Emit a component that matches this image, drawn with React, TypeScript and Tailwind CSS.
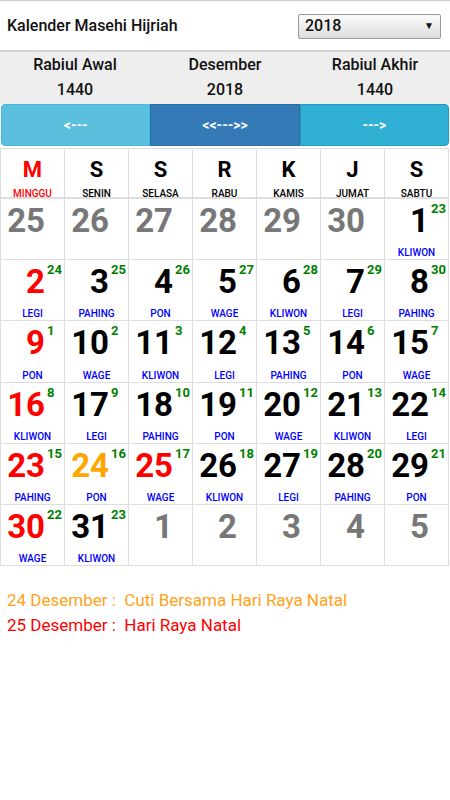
import React from "react";

type Cell = { n: number; h?: number; p?: string; c: string };

const GRAY = "text-[#777777]";
const RED = "text-[#ff0000]";
const BLK = "text-black";
const ORG = "text-[#ffa500]";

const rows: Cell[][] = [
  [
    { n: 25, c: GRAY },
    { n: 26, c: GRAY },
    { n: 27, c: GRAY },
    { n: 28, c: GRAY },
    { n: 29, c: GRAY },
    { n: 30, c: GRAY },
    { n: 1, h: 23, p: "KLIWON", c: BLK },
  ],
  [
    { n: 2, h: 24, p: "LEGI", c: RED },
    { n: 3, h: 25, p: "PAHING", c: BLK },
    { n: 4, h: 26, p: "PON", c: BLK },
    { n: 5, h: 27, p: "WAGE", c: BLK },
    { n: 6, h: 28, p: "KLIWON", c: BLK },
    { n: 7, h: 29, p: "LEGI", c: BLK },
    { n: 8, h: 30, p: "PAHING", c: BLK },
  ],
  [
    { n: 9, h: 1, p: "PON", c: RED },
    { n: 10, h: 2, p: "WAGE", c: BLK },
    { n: 11, h: 3, p: "KLIWON", c: BLK },
    { n: 12, h: 4, p: "LEGI", c: BLK },
    { n: 13, h: 5, p: "PAHING", c: BLK },
    { n: 14, h: 6, p: "PON", c: BLK },
    { n: 15, h: 7, p: "WAGE", c: BLK },
  ],
  [
    { n: 16, h: 8, p: "KLIWON", c: RED },
    { n: 17, h: 9, p: "LEGI", c: BLK },
    { n: 18, h: 10, p: "PAHING", c: BLK },
    { n: 19, h: 11, p: "PON", c: BLK },
    { n: 20, h: 12, p: "WAGE", c: BLK },
    { n: 21, h: 13, p: "KLIWON", c: BLK },
    { n: 22, h: 14, p: "LEGI", c: BLK },
  ],
  [
    { n: 23, h: 15, p: "PAHING", c: RED },
    { n: 24, h: 16, p: "PON", c: ORG },
    { n: 25, h: 17, p: "WAGE", c: RED },
    { n: 26, h: 18, p: "KLIWON", c: BLK },
    { n: 27, h: 19, p: "LEGI", c: BLK },
    { n: 28, h: 20, p: "PAHING", c: BLK },
    { n: 29, h: 21, p: "PON", c: BLK },
  ],
  [
    { n: 30, h: 22, p: "WAGE", c: RED },
    { n: 31, h: 23, p: "KLIWON", c: BLK },
    { n: 1, c: GRAY },
    { n: 2, c: GRAY },
    { n: 3, c: GRAY },
    { n: 4, c: GRAY },
    { n: 5, c: GRAY },
  ],
];

const days = [
  { l: "M", d: "MINGGU", red: true },
  { l: "S", d: "SENIN" },
  { l: "S", d: "SELASA" },
  { l: "R", d: "RABU" },
  { l: "K", d: "KAMIS" },
  { l: "J", d: "JUMAT" },
  { l: "S", d: "SABTU" },
];

export default function App() {
  return (
    <div
      className="w-[450px] h-[800px] bg-white overflow-hidden"
      style={{ fontFamily: "Roboto, 'Liberation Sans', sans-serif" }}
    >
      {/* title bar */}
      <div className="border-t border-[#cccccc] h-[50px] flex items-center justify-between pl-[7px] pr-[9px]">
        <div className="text-[16px] font-medium text-[#111]">Kalender Masehi Hijriah</div>
        <div className="w-[143px] h-[25px] mt-[1px] rounded-[2px] border border-[#9a9a9a] bg-gradient-to-b from-[#fbfbfb] to-[#dedede] flex items-center justify-between pl-[6px] pr-[6px]">
          <span className="text-[16px] font-medium text-[#111] leading-none">2018</span>
          <span className="text-[10px] text-[#111] leading-none">▼</span>
        </div>
      </div>

      {/* month band */}
      <div className="border-t-2 border-[#d4d4d4] bg-[#eeeeee] grid grid-cols-3 pb-[2px]">
        {[
          ["Rabiul Awal", "1440"],
          ["Desember", "2018"],
          ["Rabiul Akhir", "1440"],
        ].map(([a, b], i) => (
          <div key={i} className="flex flex-col items-center text-[16px] font-medium text-[#111] leading-[25px]">
            <span>{a}</span>
            <span>{b}</span>
          </div>
        ))}
      </div>

      {/* nav buttons */}
      <div className="mx-[1px] flex h-[42px] text-white text-[14px] font-bold">
        <div className="flex-1 flex items-center justify-center bg-[#5bc0de] border border-[#46b8da] rounded-l-[4px]">
          {"<---"}
        </div>
        <div className="flex-1 flex items-center justify-center bg-[#337ab7] border border-[#2e6da4]">
          {"<<--->>"}
        </div>
        <div className="flex-1 flex items-center justify-center bg-[#31b0d5] border border-[#269abc] rounded-r-[4px]">
          {"--->"}
        </div>
      </div>

      {/* calendar grid */}
      <div className="mt-[2px] w-[449px] border-t border-l border-[#dddddd]">
        <div className="flex">
          {days.map((d, i) => (
            <div
              key={i}
              className="w-[64px] h-[50px] border-r border-b-2 border-[#dddddd] flex flex-col items-center"
            >
              <span
                className={`text-[22px] font-bold leading-none mt-[10px] ${d.red ? "text-[#ff0000]" : "text-black"}`}
              >
                {d.l}
              </span>
              <span
                className={`text-[10px] font-medium leading-none mt-[8px] ${d.red ? "text-[#ff0000]" : "text-black"}`}
              >
                {d.d}
              </span>
            </div>
          ))}
        </div>
        {rows.map((r, ri) => (
          <div key={ri} className="flex">
            {r.map((c, ci) => (
              <div
                key={ci}
                className="w-[64px] h-[61.2px] border-r border-b border-[#dddddd] flex flex-col"
              >
                <div className="flex justify-end pr-[1px]">
                  <span className={`text-[33px] font-bold leading-none mt-[5px] ${c.c}`}>{c.n}</span>
                  <span className="w-[18px] pl-[2px] text-[13px] font-bold leading-none text-[#008000] mt-[3px]">
                    {c.h ?? ""}
                  </span>
                </div>
                {c.p && (
                  <div className="mt-auto pb-[1px] text-center text-[10px] font-medium leading-none text-[#0000ff]">
                    {c.p}
                  </div>
                )}
              </div>
            ))}
          </div>
        ))}
      </div>

      {/* holidays */}
      <div className="mt-[22px] pl-[7px] text-[17px] leading-[25px] whitespace-pre">
        <div className="text-[#ffa31a]">{"24 Desember :  Cuti Bersama Hari Raya Natal"}</div>
        <div className="text-[#ff0000]">{"25 Desember :  Hari Raya Natal"}</div>
      </div>
    </div>
  );
}
